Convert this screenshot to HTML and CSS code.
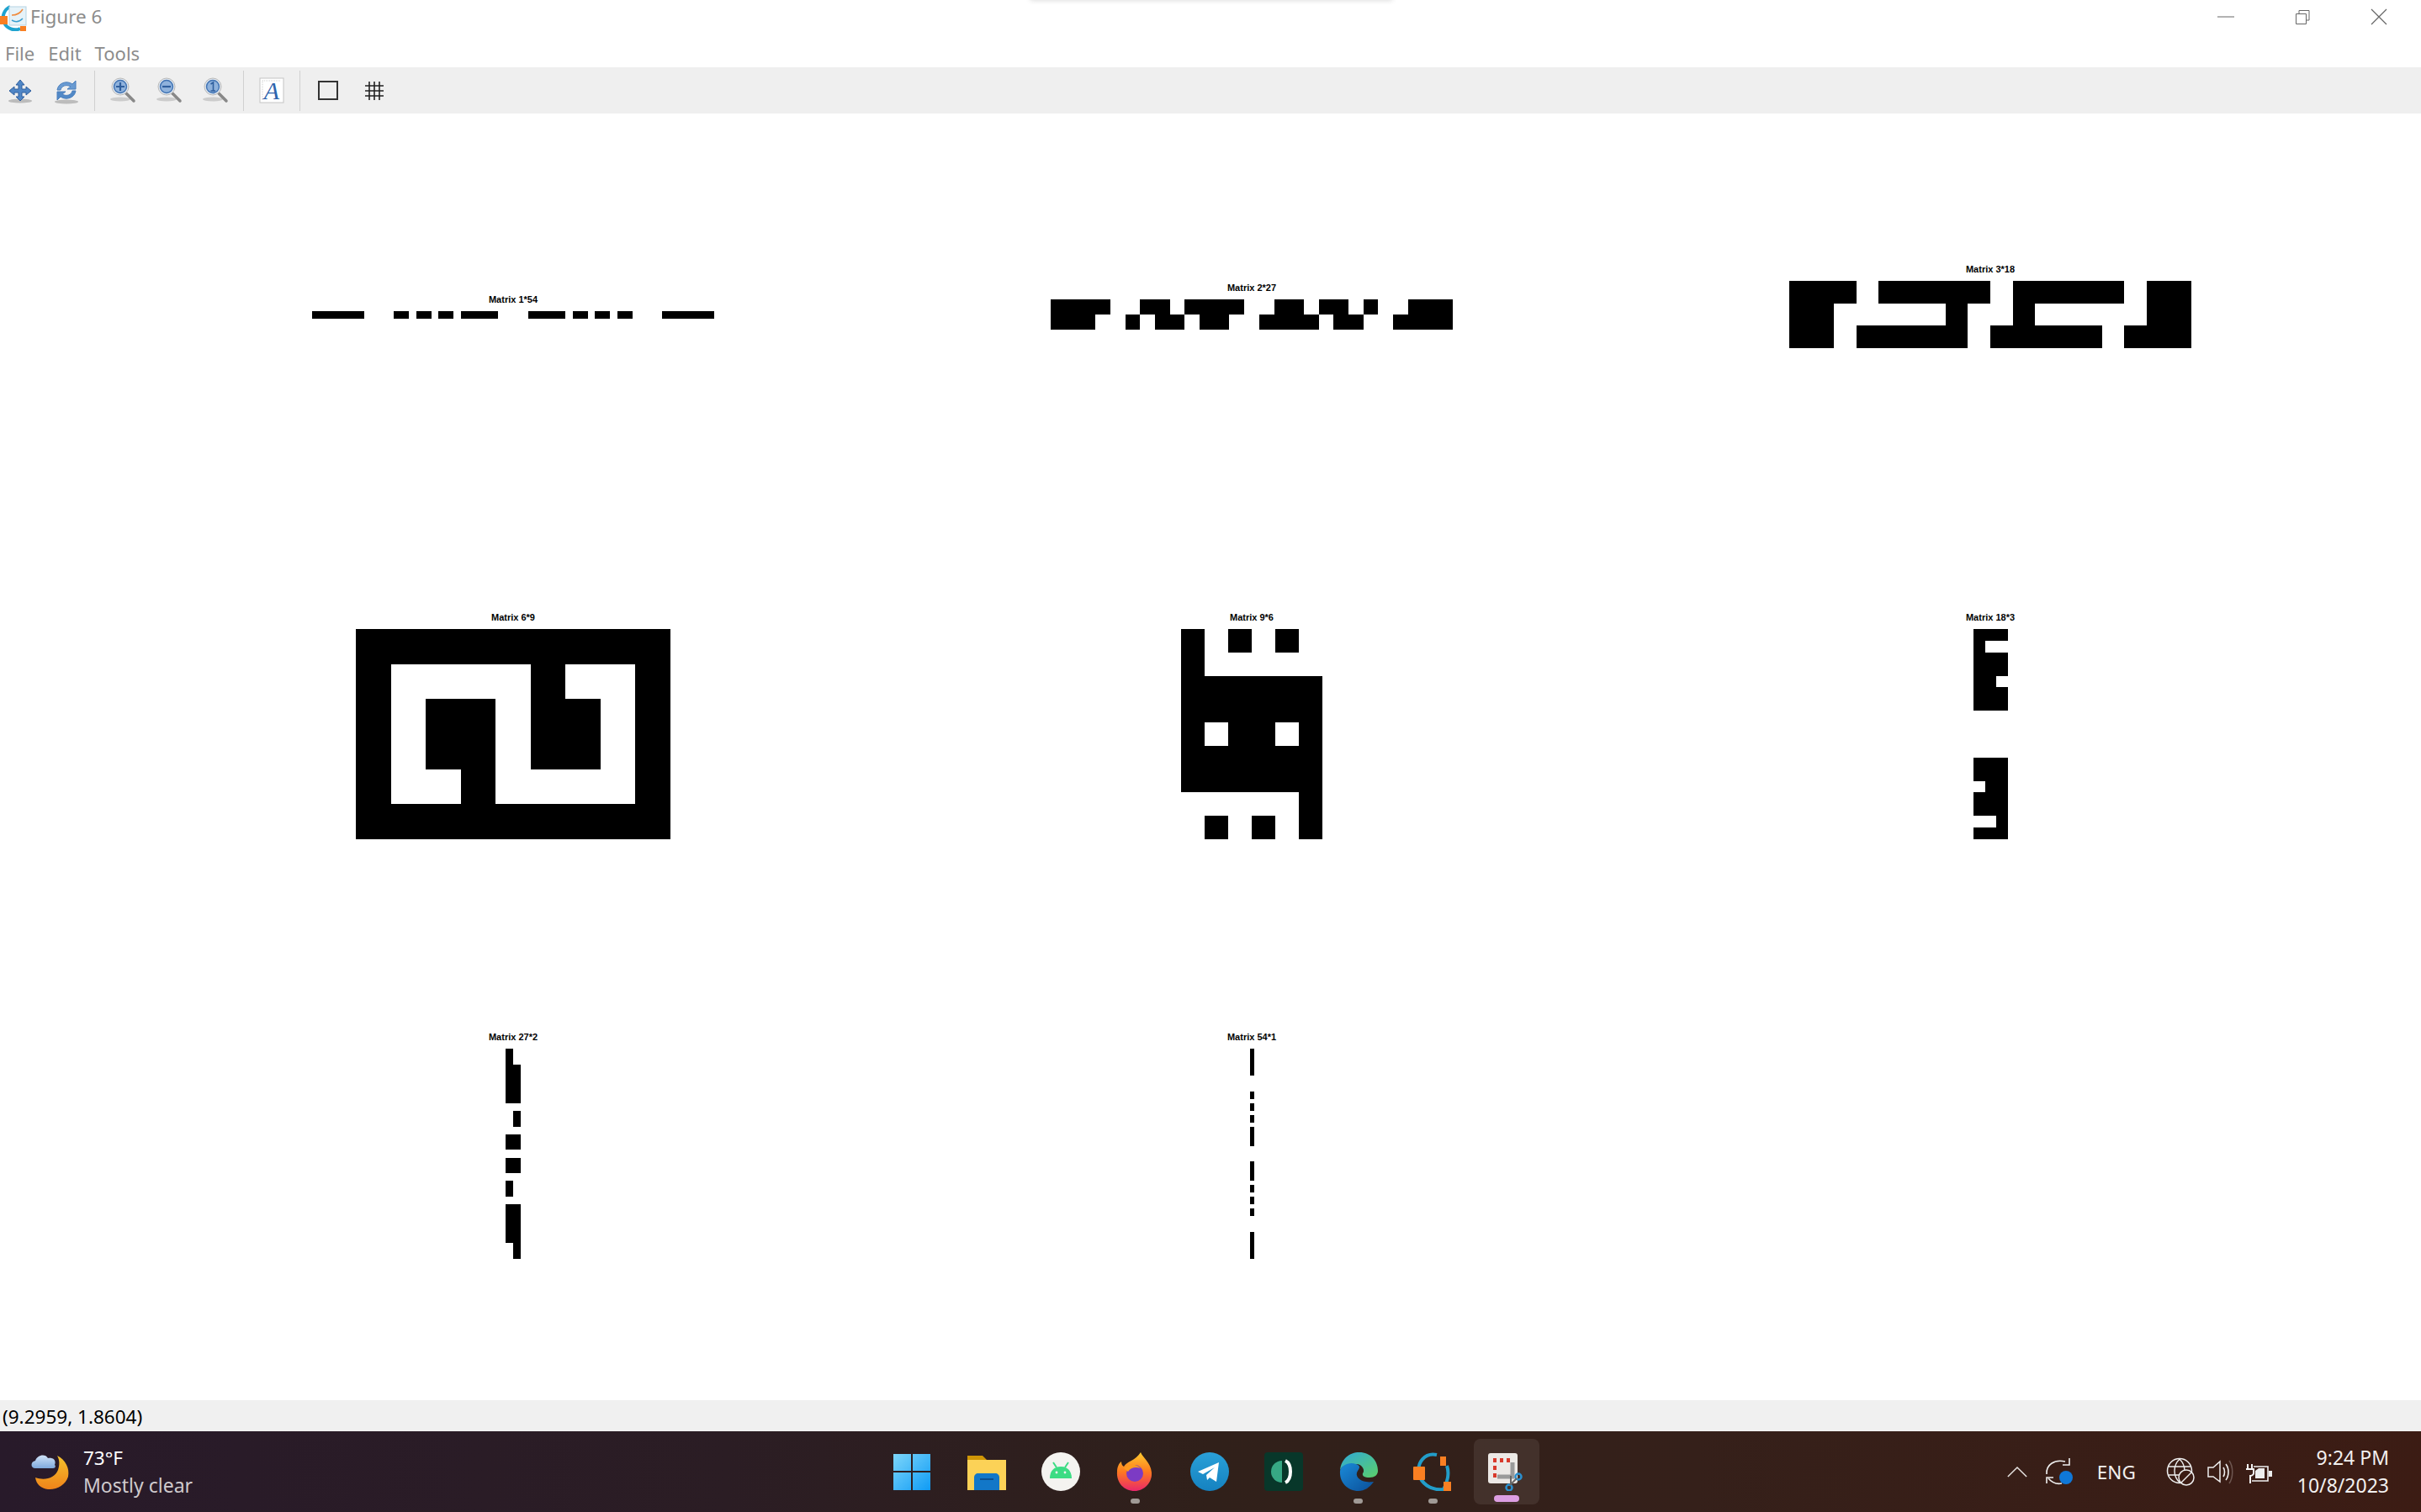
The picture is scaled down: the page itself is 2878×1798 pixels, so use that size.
FILE: index.html
```html
<!DOCTYPE html>
<html lang="en">
<head>
    <meta charset="UTF-8">
    <title>Figure 6</title>
    <link rel="stylesheet" href="styles.css">
</head>
<body>
    <div class="top-shadow"></div>
    <header class="titlebar">
        <svg class="app-logo" viewBox="0 0 32 32">
            <path d="M12 4A14 14 0 1 0 24 30" fill="none" stroke="#1ea3cf" stroke-width="4"/>
            <rect x="11" y="4" width="20" height="22" fill="#e6f2f8" stroke="#b5d3e3"/>
            <path d="M14 14C20 14 24 12 27 7" fill="none" stroke="#f08a3c" stroke-width="1.5"/>
            <path d="M14 20C19 23 23 22 27 18" fill="none" stroke="#3a9fd0" stroke-width="1.5"/>
            <rect x="0" y="15" width="9" height="10" fill="#f97f22"/>
            <rect x="24" y="27" width="7" height="7" fill="#f97f22"/>
        </svg>
        <span class="window-title">Figure 6</span>
        <div class="window-controls">
            <svg viewBox="0 0 20 20"><path d="M0 10H20" stroke="#666" fill="none"/></svg>
            <svg viewBox="0 0 20 20"><path d="M2.5 6.5H14.5V18.5H2.5ZM6 6V2.5H18V14H15" stroke="#666" fill="none"/></svg>
            <svg viewBox="0 0 20 20"><path d="M1 1L19 19M19 1L1 19" stroke="#666" stroke-width="1.2" fill="none"/></svg>
        </div>
    </header>
    <nav class="menubar">
        <span>File</span>
        <span>Edit</span>
        <span>Tools</span>
    </nav>
    <div class="toolbar">
        <button class="tool">
            <svg viewBox="0 0 32 32">
                <ellipse cx="16" cy="28" rx="14" ry="2.5" fill="#999" opacity=".6"/>
                <path d="M16 3L21 9H18V14H23V11L29 16L23 21V18H18V23H21L16 28L11 23H14V18H9V21L3 16L9 11V14H14V9H11Z" fill="#4f86c6" stroke="#2f5f9e"/>
            </svg>
        </button>
        <button class="tool">
            <svg viewBox="0 0 32 32">
                <ellipse cx="16" cy="29" rx="14" ry="2.5" fill="#999" opacity=".6"/>
                <path d="M5 15C6 7 16 3 23 8L27 4V14H17L21 11C16 8 10 10 9 15Z" fill="#6a9bd2" stroke="#4a7fbd"/>
                <path d="M27 16C26 24 16 28 9 23L5 27V17H15L11 20C16 23 22 21 23 16Z" fill="#5189c7" stroke="#4a7fbd"/>
            </svg>
        </button>
        <span class="tool-sep"></span>
        <button class="tool">
            <svg viewBox="0 0 32 32">
                <ellipse cx="13" cy="26" rx="12" ry="2.5" fill="#ccc"/>
                <path d="M20 19L29 28" stroke="#888" stroke-width="3.5" stroke-linecap="round"/>
                <circle cx="13" cy="11" r="10" fill="#dfe6ee" stroke="#b8b8b8"/>
                <circle cx="13" cy="11" r="7.5" fill="#8fb2dc" stroke="#3f72b3" stroke-width="1.4"/>
                <path d="M8 11H18M13 6V16" stroke="#2f5f9e" stroke-width="2.2"/>
            </svg>
        </button>
        <button class="tool">
            <svg viewBox="0 0 32 32">
                <ellipse cx="13" cy="26" rx="12" ry="2.5" fill="#ccc"/>
                <path d="M20 19L29 28" stroke="#888" stroke-width="3.5" stroke-linecap="round"/>
                <circle cx="13" cy="11" r="10" fill="#dfe6ee" stroke="#b8b8b8"/>
                <circle cx="13" cy="11" r="7.5" fill="#8fb2dc" stroke="#3f72b3" stroke-width="1.4"/>
                <path d="M8 11H18" stroke="#2f5f9e" stroke-width="2.2"/>
            </svg>
        </button>
        <button class="tool">
            <svg viewBox="0 0 32 32">
                <ellipse cx="13" cy="26" rx="12" ry="2.5" fill="#ccc"/>
                <path d="M20 19L29 28" stroke="#888" stroke-width="3.5" stroke-linecap="round"/>
                <circle cx="13" cy="11" r="10" fill="#dfe6ee" stroke="#b8b8b8"/>
                <circle cx="13" cy="11" r="7.5" fill="#8fb2dc" stroke="#3f72b3" stroke-width="1.4"/>
                <path d="M10.5 8L13.5 6V16M10.5 16H16" stroke="#2f5f9e" stroke-width="1.6" fill="none"/>
            </svg>
        </button>
        <span class="tool-sep"></span>
        <button class="tool">
            <svg viewBox="0 0 32 32">
                <rect x="2" y="1" width="28" height="29" fill="#fff" stroke="#c4c4c4"/>
                <path d="M5 4H27M5 4V27" stroke="#ccc" stroke-dasharray="1 1" fill="none"/>
                <text class="tool-letter" x="16" y="26">A</text>
            </svg>
        </button>
        <span class="tool-sep"></span>
        <button class="tool">
            <svg viewBox="0 0 32 32"><rect x="5" y="5" width="22" height="21" fill="none" stroke="#333" stroke-width="2"/></svg>
        </button>
        <button class="tool">
            <svg viewBox="0 0 32 32"><path d="M10 5V27M16 5V27M22 5V27M5 10H27M5 16H27M5 22H27" stroke="#222" stroke-width="1.6" fill="none"/></svg>
        </button>
    </div>

    <main class="canvas">
        <section class="subplot">
            <h2>Matrix 1*54</h2>
            <svg class="matrix m-1x54" viewBox="0 0 54 1" preserveAspectRatio="none">
                <path d="M0 0h7v1h-7zM11 0h2v1h-2zM14 0h2v1h-2zM17 0h2v1h-2zM20 0h5v1h-5zM29 0h5v1h-5zM35 0h2v1h-2zM38 0h2v1h-2zM41 0h2v1h-2zM47 0h7v1h-7z"/>
            </svg>
        </section>
        <section class="subplot">
            <h2>Matrix 2*27</h2>
            <svg class="matrix m-2x27" viewBox="0 0 27 2" preserveAspectRatio="none">
                <path d="M0 0h4v1h-4zM6 0h2v1h-2zM9 0h4v1h-4zM15 0h2v1h-2zM18 0h2v1h-2zM21 0h1v1h-1zM24 0h3v1h-3z"/>
                <path d="M0 1h3v1h-3zM5 1h1v1h-1zM7 1h2v1h-2zM10 1h2v1h-2zM14 1h4v1h-4zM19 1h2v1h-2zM23 1h4v1h-4z"/>
            </svg>
        </section>
        <section class="subplot">
            <h2>Matrix 3*18</h2>
            <svg class="matrix m-3x18" viewBox="0 0 18 3" preserveAspectRatio="none">
                <path d="M0 0h3v1h-3zM4 0h5v1h-5zM10 0h5v1h-5zM16 0h2v1h-2z"/>
                <path d="M0 1h2v1h-2zM7 1h1v1h-1zM10 1h1v1h-1zM16 1h2v1h-2z"/>
                <path d="M0 2h2v1h-2zM3 2h5v1h-5zM9 2h5v1h-5zM15 2h3v1h-3z"/>
            </svg>
        </section>
        <section class="subplot">
            <h2>Matrix 6*9</h2>
            <svg class="matrix m-6x9" viewBox="0 0 9 6" preserveAspectRatio="none">
                <path d="M0 0h9v1h-9z"/>
                <path d="M0 1h1v1h-1zM5 1h1v1h-1zM8 1h1v1h-1z"/>
                <path d="M0 2h1v2h-1zM2 2h2v2h-2zM5 2h2v2h-2zM8 2h1v2h-1z"/>
                <path d="M0 4h1v1h-1zM3 4h1v1h-1zM8 4h1v1h-1z"/>
                <path d="M0 5h9v1h-9z"/>
            </svg>
        </section>
        <section class="subplot">
            <h2>Matrix 9*6</h2>
            <svg class="matrix m-9x6" viewBox="0 0 6 9" preserveAspectRatio="none">
                <path d="M0 0h1v2h-1zM2 0h1v1h-1zM4 0h1v1h-1z"/>
                <path d="M0 2h6v2h-6z"/>
                <path d="M0 4h1v1h-1zM2 4h2v1h-2zM5 4h1v1h-1z"/>
                <path d="M0 5h6v2h-6z"/>
                <path d="M5 7h1v2h-1zM1 8h1v1h-1zM3 8h1v1h-1z"/>
            </svg>
        </section>
        <section class="subplot">
            <h2>Matrix 18*3</h2>
            <svg class="matrix m-18x3" viewBox="0 0 3 18" preserveAspectRatio="none">
                <path d="M0 0h3v1h-3zM0 1h1v1h-1zM0 2h3v2h-3zM0 4h2v1h-2zM0 5h3v2h-3z"/>
                <path d="M0 11h3v2h-3zM1 13h2v1h-2zM0 14h3v2h-3zM2 16h1v1h-1zM0 17h3v1h-3z"/>
            </svg>
        </section>
        <section class="subplot">
            <h2>Matrix 27*2</h2>
            <svg class="matrix m-27x2" viewBox="0 0 2 27" preserveAspectRatio="none">
                <path d="M0 0h1v2h-1zM0 2h2v5h-2zM1 8h1v2h-1zM0 11h2v2h-2zM0 14h2v2h-2zM0 17h1v2h-1zM0 20h2v5h-2zM1 25h1v2h-1z"/>
            </svg>
        </section>
        <section class="subplot">
            <h2>Matrix 54*1</h2>
            <svg class="matrix m-54x1" viewBox="0 0 1 54" preserveAspectRatio="none">
                <path d="M0 0h1v7h-1zM0 11h1v2h-1zM0 14h1v2h-1zM0 17h1v2h-1zM0 20h1v5h-1zM0 29h1v5h-1zM0 35h1v2h-1zM0 38h1v2h-1zM0 41h1v2h-1zM0 47h1v7h-1z"/>
            </svg>
        </section>
    </main>

    <div class="statusbar">(9.2959, 1.8604)</div>

    <footer class="taskbar">
        <div class="weather">
            <svg class="weather-icon" viewBox="0 0 46 44">
                <defs>
                    <linearGradient id="moon" x1="0" y1="0" x2="0" y2="1">
                        <stop offset="0" stop-color="#f3c22c"/>
                        <stop offset="1" stop-color="#f0831a"/>
                    </linearGradient>
                    <linearGradient id="cloud" x1="0" y1="0" x2="0" y2="1">
                        <stop offset="0" stop-color="#cfe2f7"/>
                        <stop offset="1" stop-color="#7fa9dc"/>
                    </linearGradient>
                </defs>
                <path d="M31 3C41 8 46 18 44 28C41 38 30 44 20 43C12 42 6 37 5 29C16 33 28 30 32 20C34 14 34 8 31 3Z" fill="url(#moon)"/>
                <path d="M5 18C-1 18 -1 10 5 9C7 2 17 0 20 6C27 5 30 9 28 14C30 16 28 18 26 18Z" fill="url(#cloud)"/>
            </svg>
            <div class="weather-text">
                <div class="temp">73°F</div>
                <div class="sky">Mostly clear</div>
            </div>
        </div>

        <div class="task-icons">
            <div class="task">
                <svg viewBox="0 0 46 46">
                    <defs>
                        <linearGradient id="win" x1="0" y1="0" x2="1" y2="1">
                            <stop offset="0" stop-color="#7dd6fa"/>
                            <stop offset="1" stop-color="#0f9bf5"/>
                        </linearGradient>
                    </defs>
                    <path d="M1 2H22V22H1ZM24 2H45V22H24ZM1 24H22V45H1ZM24 24H45V45H24Z" fill="url(#win)"/>
                </svg>
            </div>
            <div class="task">
                <svg viewBox="0 0 46 46">
                    <path d="M0 4H18L23 9H0Z" fill="#cf9606"/>
                    <rect x="0" y="9" width="46" height="36" fill="#fcd257"/>
                    <path d="M8 45V30C8 27 10 25 13 25H33C36 25 38 27 38 30V45Z" fill="#1277c8"/>
                    <path d="M15 32H31" stroke="#0b4f8f" stroke-width="2"/>
                </svg>
            </div>
            <div class="task">
                <svg viewBox="0 0 46 46">
                    <ellipse cx="23" cy="23" rx="23" ry="23" fill="#f4f3f0"/>
                    <path d="M10 31C10 22 15 17 23 17C31 17 36 22 36 31Z" fill="#3ddc84"/>
                    <path d="M14 12L18 18M32 12L28 18" stroke="#3ddc84" stroke-width="2"/>
                    <circle cx="18" cy="24" r="1.4" fill="#f4f3f0"/>
                    <circle cx="28" cy="24" r="1.4" fill="#f4f3f0"/>
                </svg>
            </div>
            <div class="task running">
                <svg viewBox="0 0 46 46">
                    <defs>
                        <linearGradient id="fox" x1="0" y1="0" x2="0" y2="1">
                            <stop offset="0" stop-color="#ffcb2e"/>
                            <stop offset=".5" stop-color="#ff7a1f"/>
                            <stop offset="1" stop-color="#e8276b"/>
                        </linearGradient>
                    </defs>
                    <path d="M30 0C32 6 42 12 43 24C44 36 34 46 23 46C10 46 1 36 2 23C2 18 4 13 7 11C7 14 8 16 10 17C13 11 24 10 30 0Z" fill="url(#fox)"/>
                    <circle cx="23" cy="25" r="10" fill="#7c3bc4"/>
                    <path d="M10 19C15 13 24 13 30 19C24 17 18 18 15 23Z" fill="#ff9a1f"/>
                </svg>
            </div>
            <div class="task">
                <svg viewBox="0 0 46 46">
                    <defs>
                        <linearGradient id="tg" x1="0" y1="0" x2="0" y2="1">
                            <stop offset="0" stop-color="#2aa0d8"/>
                            <stop offset="1" stop-color="#1582c0"/>
                        </linearGradient>
                    </defs>
                    <circle cx="23" cy="23" r="23" fill="url(#tg)"/>
                    <path d="M9 23L34 12L31 35L23 30L20 33L19 27L29 18L15 26Z" fill="#fff"/>
                </svg>
            </div>
            <div class="task">
                <svg viewBox="0 0 46 46">
                    <rect x="0" y="0" width="46" height="46" rx="4" fill="#08372a"/>
                    <path d="M21 10A13 13 0 0 0 21 36Z" fill="#37a884"/>
                    <path d="M25 10C33 14 33 32 25 36" fill="none" stroke="#fff" stroke-width="4"/>
                </svg>
            </div>
            <div class="task running">
                <svg viewBox="0 0 46 46">
                    <defs>
                        <linearGradient id="edge-a" x1="0" y1="0" x2="1" y2="1">
                            <stop offset="0" stop-color="#2fa8d8"/>
                            <stop offset="1" stop-color="#5bd06a"/>
                        </linearGradient>
                        <linearGradient id="edge-b" x1="0" y1="0" x2="1" y2="1">
                            <stop offset="0" stop-color="#1a8ad8"/>
                            <stop offset="1" stop-color="#0b4f98"/>
                        </linearGradient>
                    </defs>
                    <path d="M1 22C2 8 12 0 24 0C37 0 46 10 46 22C46 27 42 30 36 30C30 30 27 28 28 25C31 22 28 14 20 14C10 14 2 16 1 22Z" fill="url(#edge-a)"/>
                    <path d="M1 22C3 15 12 11 20 14C26 16 24 19 22 22C18 28 24 34 32 35C36 36 40 35 41 35C36 42 30 46 23 46C10 46 0 36 1 22Z" fill="url(#edge-b)"/>
                </svg>
            </div>
            <div class="task running">
                <svg viewBox="0 0 46 46">
                    <path d="M28 3C14 0 4 12 7 26C9 36 20 46 36 44C41 36 43 24 40 16" fill="none" stroke="#229dc9" stroke-width="4"/>
                    <rect x="0" y="17" width="14" height="16" rx="1" fill="#f97f22"/>
                    <rect x="32" y="5" width="7" height="11" fill="#f97f22"/>
                    <rect x="36" y="35" width="9" height="11" fill="#f97f22"/>
                </svg>
            </div>
            <div class="task active">
                <svg viewBox="0 0 46 46">
                    <rect x="1" y="1" width="35" height="36" rx="3" fill="#ece9e6"/>
                    <path d="M7 7h4v5h-4zM15 7h4v5h-4zM23 7h4v5h-4zM7 16h4v5h-4zM7 25h4v5h-4z" fill="#d8392b"/>
                    <path d="M30 12V29H12" fill="none" stroke="#9a9a9a" stroke-width="5"/>
                    <circle cx="37" cy="29" r="3.5" fill="none" stroke="#2a90cf" stroke-width="2.5"/>
                    <circle cx="26" cy="42" r="3.5" fill="none" stroke="#2a90cf" stroke-width="2.5"/>
                    <path d="M35 31L27 39M28 28V38" stroke="#666" stroke-width="2"/>
                </svg>
            </div>
        </div>

        <div class="tray">
            <svg class="tray-chevron" viewBox="0 0 28 16"><path d="M2 14L14 2L26 14" stroke="#e8e4e2" stroke-width="1.6" fill="none"/></svg>
            <svg class="tray-sync" viewBox="0 0 34 34">
                <path d="M2 20C1 9 11 2 24 5M4 25C9 31 15 32 20 31" stroke="#eee" stroke-width="1.6" fill="none"/>
                <path d="M29 1V9H21M2 31V24H10" stroke="#eee" stroke-width="1.6" fill="none"/>
                <circle cx="25" cy="24" r="8" fill="#0f78d8"/>
            </svg>
            <span class="tray-lang">ENG</span>
            <div class="tray-status">
                <svg viewBox="0 0 34 34">
                    <circle cx="16" cy="16" r="14.5" stroke="#eee" stroke-width="1.5" fill="none"/>
                    <path d="M16 2C8 10 8 22 16 30M16 2C24 10 24 22 16 30M2 11H30M2 21H30" stroke="#eee" stroke-width="1.4" fill="none"/>
                    <circle cx="24" cy="24" r="9" fill="#3c1c14" stroke="#eee" stroke-width="1.5"/>
                    <path d="M18 30L30 18" stroke="#eee" stroke-width="1.5"/>
                </svg>
                <svg viewBox="0 0 34 34">
                    <path d="M3 12H9L17 5V29L9 23H3Z" stroke="#eee" stroke-width="1.5" fill="none"/>
                    <path d="M21 12C23 15 23 20 21 23M24 8C28 13 28 22 24 27" stroke="#eee" stroke-width="1.6" fill="none"/>
                    <path d="M28 4C33 11 33 24 28 31" stroke="#6d5650" stroke-width="1.5" fill="none"/>
                </svg>
                <svg viewBox="0 0 34 34">
                    <path d="M3 8V14M8 8V14M1 14H10V19C10 21 7 22 6 22V31" stroke="#f4f4f4" stroke-width="2" fill="none"/>
                    <path d="M10 11H27V28H8" stroke="#eee" stroke-width="1.6" fill="none"/>
                    <path d="M12 25V16L16 13H23V25Z" fill="#eee"/>
                    <path d="M28 16H32V23H28Z" fill="#eee"/>
                </svg>
            </div>
            <div class="clock">
                <div>9:24 PM</div>
                <div>10/8/2023</div>
            </div>
        </div>
    </footer>
</body>
</html>
```

FILE: styles.css
```css
body {
    margin: 0;
    height: 1798px;
    display: flex;
    flex-direction: column;
    overflow: hidden;
    background-color: #fff;
    font-family: "Noto Sans", sans-serif;
}

/* faint shadow of the snap bar at the top of the screen */
.top-shadow {
    position: absolute;
    top: -6px;
    left: 1225px;
    width: 430px;
    height: 6px;
    box-shadow: 0 0 6px rgba(0, 0, 0, 0.18);
}

.titlebar {
    display: flex;
    align-items: center;
    height: 39px;
    padding-bottom: 9px;
    flex: none;
}

.app-logo {
    width: 32px;
    height: 34px;
}

.window-title {
    margin-left: 4px;
    font-size: 22.5px;
    color: #8c8c8c;
}

.window-controls {
    display: flex;
    gap: 71px;
    margin-left: auto;
    margin-right: 40px;
}

.window-controls svg {
    width: 20px;
    height: 20px;
}

.menubar {
    display: flex;
    gap: 16px;
    align-items: center;
    height: 30px;
    padding: 0 0 2px 6px;
    flex: none;
    font-size: 22px;
    color: #8c8c8c;
}

.toolbar {
    display: flex;
    align-items: center;
    gap: 7px;
    height: 55px;
    flex: none;
    background-color: #efefef;
}

.tool {
    display: flex;
    align-items: center;
    justify-content: center;
    width: 48px;
    height: 48px;
    padding: 0;
    border: none;
    background: none;
}

.tool svg {
    width: 32px;
    height: 32px;
}

.tool-sep {
    width: 1px;
    height: 48px;
    margin: 0 2px;
    background-color: #d0d0d0;
}

.tool-letter {
    font-family: "Liberation Serif", serif;
    font-style: italic;
    font-size: 30px;
    fill: #2f64ad;
    text-anchor: middle;
}

.canvas {
    flex: 1;
    display: grid;
    grid-template-columns: repeat(3, 878px);
    grid-auto-rows: 460px;
    row-gap: 39px;
    padding: 9px 0 0 171px;
}

.subplot {
    display: grid;
    grid-template-rows: 1fr auto 1fr;
    justify-items: center;
}

.subplot h2 {
    align-self: end;
    margin: 0 0 7px;
    font-family: "Liberation Sans", sans-serif;
    font-size: 11px;
    line-height: 14px;
    font-weight: bold;
    color: #000;
}

.matrix {
    display: block;
    shape-rendering: crispEdges;
}

.m-1x54 { width: 478px; height: 9px; }
.m-2x27 { width: 478px; height: 36px; }
.m-3x18 { width: 478px; height: 80px; }
.m-6x9 { width: 374px; height: 250px; }
.m-9x6 { width: 168px; height: 250px; }
.m-18x3 { width: 41px; height: 250px; }
.m-27x2 { width: 18px; height: 250px; }
.m-54x1 { width: 5px; height: 250px; }

.statusbar {
    display: flex;
    align-items: center;
    height: 35px;
    padding: 2px 0 0 3px;
    flex: none;
    background-color: #f0f0f0;
    font-size: 22.5px;
    color: #000;
}

.taskbar {
    display: grid;
    grid-template-columns: 1040px 800px 1fr;
    align-items: center;
    height: 96px;
    flex: none;
    color: #fff;
    background: linear-gradient(90deg, #281a2a 0%, #2b1d24 30%, #30201a 50%, #35201a 70%, #3c1c14 100%);
}

.weather {
    display: flex;
    align-items: center;
    gap: 16px;
    padding-left: 37px;
}

.weather-icon {
    width: 46px;
    height: 44px;
}

.temp {
    font-size: 22.5px;
    line-height: 32px;
}

.sky {
    font-size: 23px;
    line-height: 32px;
    color: #cfcacd;
}

.task-icons {
    display: flex;
}

.task {
    position: relative;
    display: flex;
    align-items: center;
    justify-content: center;
    width: 88.4px;
    height: 78px;
    box-sizing: border-box;
}

.task svg {
    width: 46px;
    height: 46px;
}

.task.running::after {
    content: "";
    position: absolute;
    left: 39px;
    bottom: 1px;
    width: 11px;
    height: 6px;
    border-radius: 3px;
    background-color: #a09a96;
}

.task.active {
    background-color: rgba(255, 255, 255, 0.08);
    border-radius: 8px;
    margin-left: 5px;
    width: 78px;
}

.task.active::after {
    content: "";
    position: absolute;
    left: 24px;
    bottom: 3px;
    width: 30px;
    height: 8px;
    border-radius: 4px;
    background-color: #dc9ee2;
}

.tray {
    display: flex;
    align-items: center;
    justify-content: flex-end;
    padding-right: 38px;
    color: #f2f0ef;
}

.tray-chevron {
    width: 26px;
    height: 15px;
    margin-right: 20px;
}

.tray-sync {
    width: 34px;
    height: 34px;
    margin-right: 28px;
}

.tray-lang {
    width: 46px;
    margin-right: 36px;
    font-size: 22.5px;
}

.tray-status {
    display: flex;
    gap: 13px;
    margin-right: 28px;
}

.tray-status svg {
    width: 34px;
    height: 34px;
}

.clock {
    text-align: right;
    font-size: 23px;
    line-height: 33px;
}
```
